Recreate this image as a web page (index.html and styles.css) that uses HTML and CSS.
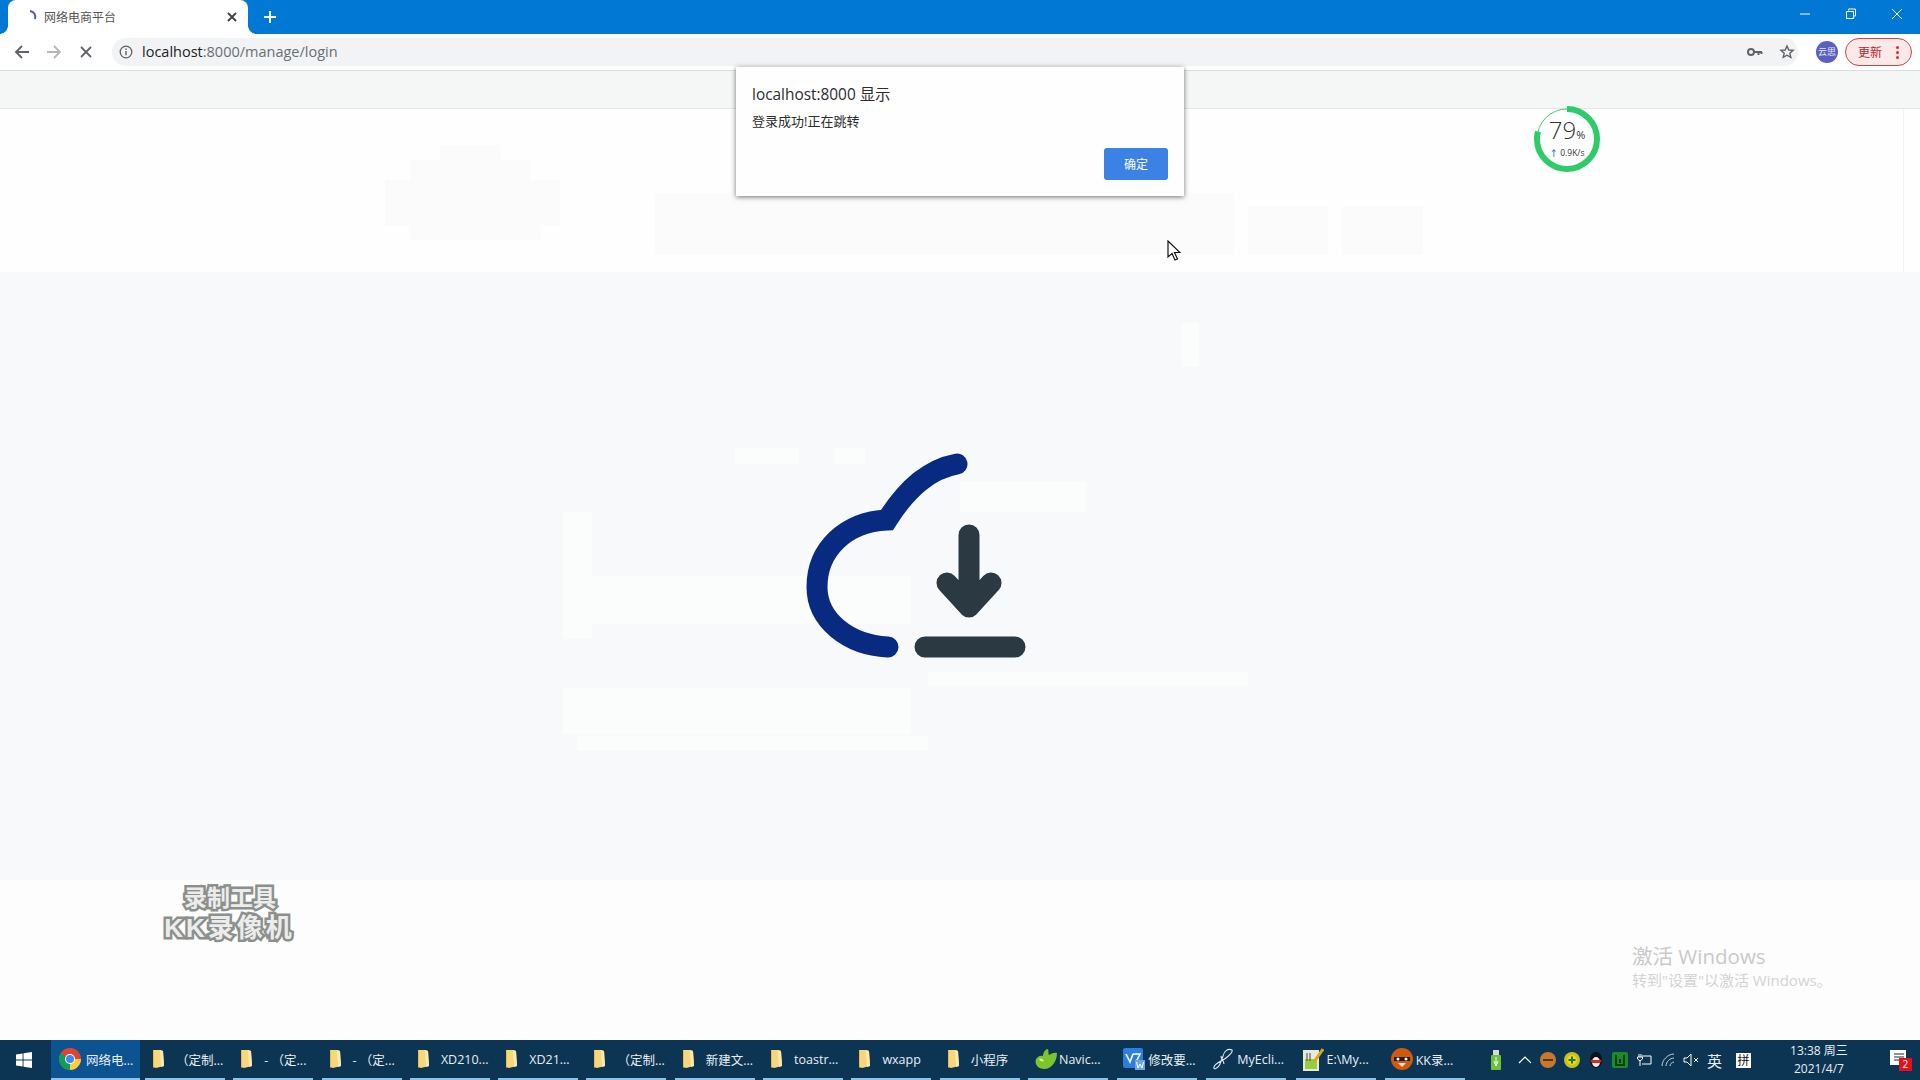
FILE: index.html
```html
<!DOCTYPE html>
<html lang="zh-CN">
<head>
    <meta charset="UTF-8">
    <meta name="viewport" content="width=device-width, initial-scale=1.0">
    <title>网络电商平台</title>
    <link rel="stylesheet" href="styles.css">
</head>
<body>
    <svg class="defs" width="0" height="0">
        <symbol id="folder" viewBox="0 0 16 20">
            <path d="M2 1h7l3 1 1 15-8 2-3-1z" fill="#f6d77c"/>
            <path d="M9 1l3 1 1 15-3 1z" fill="#fbe9ae"/>
            <path d="M2 1v17l1 1V2z" fill="#e9b94c"/>
        </symbol>
    </svg>

    <div class="titlebar">
        <div class="tab">
            <svg class="spinner" width="16" height="16" viewBox="0 0 16 16"><path d="M8 2a6 6 0 0 1 5 8" fill="none" stroke="#5b4fc4" stroke-width="2"/></svg>
            <span class="tab-title">网络电商平台</span>
            <svg class="tab-close" width="12" height="12" viewBox="0 0 12 12"><path d="M2 2l8 8M10 2l-8 8" stroke="#3c4043" stroke-width="1.8"/></svg>
        </div>
        <svg class="new-tab" width="14" height="14" viewBox="0 0 14 14"><path d="M7 1v12M1 7h12" stroke="#fff" stroke-width="2"/></svg>
        <div class="window-btns">
            <svg width="12" height="12" viewBox="0 0 12 12"><path d="M1 6h10" stroke="#fff"/></svg>
            <svg width="12" height="12" viewBox="0 0 12 12"><path d="M3.5 2.5V1h7v7H9M1.5 3.5h7v7h-7z" fill="none" stroke="#fff"/></svg>
            <svg width="12" height="12" viewBox="0 0 12 12"><path d="M1 1l10 10M11 1L1 11" stroke="#fff"/></svg>
        </div>
    </div>

    <div class="toolbar">
        <svg class="nav" width="16" height="16" viewBox="0 0 16 16"><path d="M15 8H2M8 2L2 8l6 6" fill="none" stroke="#5f6368" stroke-width="1.8"/></svg>
        <svg class="nav" width="16" height="16" viewBox="0 0 16 16"><path d="M1 8h13M8 2l6 6-6 6" fill="none" stroke="#b4b6b8" stroke-width="1.8"/></svg>
        <svg class="nav" width="16" height="16" viewBox="0 0 16 16"><path d="M3 3l10 10M13 3L3 13" fill="none" stroke="#5f6368" stroke-width="1.8"/></svg>
        <div class="omnibox">
            <svg width="14" height="14" viewBox="0 0 14 14"><circle cx="7" cy="7" r="5.8" fill="none" stroke="#5f6368" stroke-width="1.3"/><path d="M7 6v4.2M7 3.6v1.3" stroke="#5f6368" stroke-width="1.4"/></svg>
            <span class="url">localhost<span class="url-path">:8000/manage/login</span></span>
            <svg class="key" width="16" height="10" viewBox="0 0 16 10"><circle cx="4" cy="5" r="3" fill="none" stroke="#5f6368" stroke-width="2"/><path d="M7 5h8M11.5 5v3M14.5 5v2" stroke="#5f6368" stroke-width="2"/></svg>
            <svg class="star" width="16" height="16" viewBox="0 0 16 16"><path d="M8 2l1.8 4 4.3.4-3.3 2.8 1 4.2L8 11.2l-3.8 2.2 1-4.2L1.900 6.400 6.200 6z" fill="none" stroke="#5f6368" stroke-width="1.4"/></svg>
        </div>
        <div class="avatar">云思</div>
        <div class="update">更新<span class="dots"><i></i><i></i><i></i></span></div>
    </div>

    <div class="bookmarks"></div>

    <div class="page-top"></div>
    <div class="stage">
        <svg width="340" height="260" viewBox="0 0 340 260">
            <path d="M167 19C140 24 118 42 97 75C55 77 27 105 27 142C27 175 58 200 98 202" fill="none" stroke="#082a80" stroke-width="21" stroke-linecap="round" stroke-linejoin="miter"/>
            <path d="M179 90V162M157 138l22 24 22-24M135 202h90" fill="none" stroke="#2b3a42" stroke-width="21" stroke-linecap="round" stroke-linejoin="round"/>
        </svg>
    </div>
    <div class="page-bottom"></div>

    <div class="taskbar">
        <div class="start">
            <svg width="16" height="16" viewBox="0 0 16 16"><path d="M0 2.500l6.600-1v6H0zM7.500 1.300L16 0v7.500H7.500zM0 8.500h6.600v6L0 13.500zM7.500 8.500H16V16l-8.500-1.300z" fill="#fff"/></svg>
        </div>
        <div class="task task-active">
            <svg class="task-icon" width="22" height="22" viewBox="0 0 22 22">
                <circle cx="11" cy="11" r="11" fill="#db4437"/>
                <path d="M11 11L1.500 5.500A11 11 0 0 0 11 22z" fill="#0f9d58"/>
                <path d="M11 11h11A11 11 0 0 1 11 22z" fill="#ffcd40"/>
                <circle cx="11" cy="11" r="5" fill="#fff"/>
                <circle cx="11" cy="11" r="4" fill="#4285f4"/>
            </svg>
            <span>网络电...</span>
        </div>
        <div class="task"><svg class="task-icon folder"><use href="#folder"/></svg><span>（定制...</span></div>
        <div class="task"><svg class="task-icon folder"><use href="#folder"/></svg><span>- （定...</span></div>
        <div class="task"><svg class="task-icon folder"><use href="#folder"/></svg><span>- （定...</span></div>
        <div class="task"><svg class="task-icon folder"><use href="#folder"/></svg><span>XD210...</span></div>
        <div class="task"><svg class="task-icon folder"><use href="#folder"/></svg><span>XD21...</span></div>
        <div class="task"><svg class="task-icon folder"><use href="#folder"/></svg><span>（定制...</span></div>
        <div class="task"><svg class="task-icon folder"><use href="#folder"/></svg><span>新建文...</span></div>
        <div class="task"><svg class="task-icon folder"><use href="#folder"/></svg><span>toastr...</span></div>
        <div class="task"><svg class="task-icon folder"><use href="#folder"/></svg><span>wxapp</span></div>
        <div class="task"><svg class="task-icon folder"><use href="#folder"/></svg><span>小程序</span></div>
        <div class="task task-wide">
            <svg class="task-icon" width="24" height="22" viewBox="0 0 24 22"><path d="M2 11c2-3 5-4 7-3 0-3 2-7 5-7 1 3 0 5 1 6 2-1 5-3 8-2 0 8-5 16-13 16C5 21 0 17 2 11z" fill="#7cc52c"/><path d="M5 11c2-1 4 0 5 2-2 1-4 0-5-2z" fill="#d8f29a"/></svg>
            <span>Navic...</span>
        </div>
        <div class="task task-wide">
            <svg class="task-icon" width="22" height="22" viewBox="0 0 22 22"><rect width="20" height="20" rx="2" fill="#2e7de0"/><path d="M3 6l4 8 3-8M10 6h7l-4 8" fill="none" stroke="#fff" stroke-width="1.600"/><rect x="12" y="12" width="10" height="10" fill="#6ea5e8"/><path d="M13.500 14l1.500 6 2-4 2 4 1.500-6" fill="none" stroke="#fff"/></svg>
            <span>修改要...</span>
        </div>
        <div class="task task-wide">
            <svg class="task-icon" width="22" height="24" viewBox="0 0 22 24"><path d="M20 2c-4-2-8 1-9 6L8 16c-2 5-7 6-6 3 1-4 8-6 12-9 4-3 7-6 6-8zM9 8c0 3 3 5 3 8" fill="none" stroke="#dfe8f0" stroke-width="1.100"/></svg>
            <span>MyEcli...</span>
        </div>
        <div class="task task-wide">
            <svg class="task-icon" width="22" height="24" viewBox="0 0 22 24"><rect x="1" y="2" width="16" height="21" fill="#e6ebd8"/><rect x="3" y="11" width="12" height="10" fill="#9ccc3c"/><path d="M5 5v8M8 5v8" stroke="#445"/><path d="M12 14L21 1" stroke="#e0a020" stroke-width="3"/></svg>
            <span>E:\My...</span>
        </div>
        <div class="task task-wide">
            <svg class="task-icon" width="22" height="22" viewBox="0 0 22 22"><circle cx="11" cy="11" r="11" fill="#d2580f"/><path d="M3 9h16v4H3z" fill="#1d1d1d"/><circle cx="7" cy="11" r="1.500" fill="#fff"/><circle cx="15" cy="11" r="1.500" fill="#fff"/><path d="M7 15h8l-4 4z" fill="#f3e2c7"/></svg>
            <span>KK录...</span>
        </div>

        <div class="tray">
            <svg class="tray-usb" width="10" height="20" viewBox="0 0 10 20"><rect x="2" y="0" width="6" height="5" fill="#d8d8d8"/><rect y="5" width="10" height="15" rx="1" fill="#6fbf3a"/><path d="M5 7v9M3 11l2 5 2-5" stroke="#fff" fill="none"/></svg>
            <svg class="tray-up" width="14" height="8" viewBox="0 0 14 8"><path d="M1 7l6-6 6 6" fill="none" stroke="#fff" stroke-width="1.200"/></svg>
            <svg class="tray-ic" width="16" height="16" viewBox="0 0 16 16"><circle cx="8" cy="8" r="8" fill="#c8782a"/><path d="M3 7h10v2H3z" fill="#5c3312"/></svg>
            <svg class="tray-ic" width="16" height="16" viewBox="0 0 16 16"><circle cx="8" cy="8" r="8" fill="#c8c020"/><circle cx="8" cy="8" r="5" fill="#e8d820"/><path d="M8 4.500v7M4.500 8h7" stroke="#2a7a20" stroke-width="2"/></svg>
            <svg class="tray-ic" width="16" height="18" viewBox="0 0 16 18"><ellipse cx="8" cy="9" rx="6" ry="8" fill="#111"/><ellipse cx="8" cy="11" rx="4" ry="5" fill="#eee"/><path d="M2 9h12l-2 3H4z" fill="#d8262c"/></svg>
            <svg class="tray-ic" width="16" height="16" viewBox="0 0 16 16"><rect width="16" height="16" rx="2" fill="#1d8a2a"/><path d="M4 3v10h8V3M8 7v4" stroke="#0b3f14" stroke-width="2" fill="none"/></svg>
            <svg class="tray-ic" width="16" height="14" viewBox="0 0 16 14"><path d="M6 3h9v8H6M3 1v3M5 1v3M1.500 4h5v2l-2.500 2-2.500-2zM4 8v5" fill="none" stroke="#fff"/></svg>
            <svg class="tray-ic tray-wifi" width="14" height="14" viewBox="0 0 14 14"><path d="M1 13C1 7 7 1 13 1M5 13c0-4 4-8 8-8M9 13c0-2 2-4 4-4" fill="none" stroke="#c8d2da"/></svg>
            <svg class="tray-ic" width="16" height="14" viewBox="0 0 16 14"><path d="M1 5v4h3l4 4V1L4 5z" fill="none" stroke="#fff"/><path d="M11 5l4 4M15 5l-4 4" stroke="#fff"/></svg>
            <span class="ime">英</span>
            <span class="pinyin">拼</span>
            <div class="clock">
                <div>13:38 周三</div>
                <div>2021/4/7</div>
            </div>
            <div class="notify">
                <svg width="16" height="16" viewBox="0 0 16 16"><path d="M0 0h16v15H0z" fill="#fff"/><path d="M4 4h10M4 7h10M4 10h7" stroke="#223"/></svg>
                <span class="badge">2</span>
            </div>
        </div>
    </div>

    <div class="dialog">
        <div class="dialog-title">localhost:8000 显示</div>
        <div class="dialog-msg">登录成功!正在跳转</div>
        <div class="dialog-foot"><button class="dialog-ok">确定</button></div>
    </div>

    <div class="gauge">
        <svg width="68" height="68" viewBox="0 0 68 68">
            <circle cx="34" cy="34" r="30" fill="#fff" stroke="#3fce73" stroke-width="1"/>
            <circle cx="34" cy="34" r="30" fill="none" stroke="#2fcb68" stroke-width="6" pathLength="100" stroke-dasharray="79 21" transform="rotate(-90 34 34)"/>
        </svg>
        <div class="gauge-text">
            <div class="gauge-num">79<small>%</small></div>
            <div class="gauge-speed"><b>↑</b> 0.9K/s</div>
        </div>
    </div>

    <svg class="cursor" width="14" height="22" viewBox="0 0 14 22"><path d="M1 1v16l4-3.500 3 6.500 2.500-1-3-6.500H13z" fill="#fff" stroke="#111" stroke-width="1.200"/></svg>

    <div class="watermark">
        <div class="wm-one">录制工具</div>
        <div class="wm-two">KK录像机</div>
    </div>

    <div class="activate">
        <div class="activate-big">激活 Windows</div>
        <div class="activate-small">转到"设置"以激活 Windows。</div>
    </div>
</body>
</html>
```

FILE: styles.css
```css
* {
    box-sizing: border-box;
}
html, body {
    margin: 0;
    height: 100%;
    overflow: hidden;
}
body {
    display: flex;
    flex-direction: column;
    height: 1080px;
    background: #fdfefd;
    font-family: "Open Sans", "Noto Sans CJK SC", sans-serif;
    color: #3c4043;
}
.defs {
    position: absolute;
}

/* browser chrome */
.titlebar {
    height: 34px;
    background: #0078d4;
    display: flex;
    align-items: center;
    flex-shrink: 0;
}
.tab {
    position: relative;
    width: 240px;
    height: 34px;
    margin-left: 8px;
    background: #fff;
    border-radius: 8px 8px 0 0;
    display: flex;
    align-items: center;
    padding: 0 10px 0 14px;
}
.tab::before, .tab::after {
    content: "";
    position: absolute;
    bottom: 0;
    width: 8px;
    height: 8px;
}
.tab::before {
    left: -8px;
    background: radial-gradient(circle at 0 0, #0078d4 7.500px, #fff 8px);
}
.tab::after {
    right: -8px;
    background: radial-gradient(circle at 100% 0, #0078d4 7.500px, #fff 8px);
}
.tab-title {
    margin-left: 6px;
    font-size: 12px;
    color: #555;
    flex: 1;
}
.new-tab {
    margin-left: 15px;
}
.window-btns {
    margin-left: auto;
    display: flex;
    gap: 34px;
    padding-right: 17px;
    margin-top: -6px;
}
.toolbar {
    height: 37px;
    background: #fff;
    border-bottom: 1px solid #dadce0;
    display: flex;
    align-items: center;
    padding-left: 14px;
    flex-shrink: 0;
}
.nav {
    margin-right: 16px;
}
.omnibox {
    width: 1686px;
    height: 28px;
    margin-left: 2px;
    background: #f1f3f4;
    border-radius: 14px;
    display: flex;
    align-items: center;
    padding: 0 3px 0 7px;
}
.url {
    margin-left: 9px;
    padding-bottom: 2px;
    font-size: 14.500px;
    color: #202124;
    flex: 1;
}
.url-path {
    color: #6b6e72;
}
.star {
    margin-left: 16px;
}
.avatar {
    width: 22px;
    height: 22px;
    margin-left: 18px;
    border-radius: 50%;
    background: #5b5fc0;
    color: #e8e8ff;
    font-size: 9px;
    line-height: 22px;
    text-align: center;
}
.update {
    width: 67px;
    height: 28px;
    margin-left: 7px;
    border: 1px solid #d0404a;
    border-radius: 14px;
    background: #fde9e7;
    color: #b3262e;
    font-size: 12px;
    display: flex;
    align-items: center;
    padding-left: 12px;
}
.dots {
    margin-left: 14px;
    display: flex;
    flex-direction: column;
    gap: 2px;
}
.dots i {
    width: 3px;
    height: 3px;
    border-radius: 50%;
    background: #d0303a;
}
.bookmarks {
    height: 38px;
    background: #f5f6f6;
    border-bottom: 1px solid #e4e5e5;
    flex-shrink: 0;
}

/* page, the blurred leftovers of the old frame are plain background rects */
.page-top {
    --p: linear-gradient(#fbfbfb, #fbfbfb);
    height: 163px;
    background:
        var(--p) 440px 36px / 60px 20px no-repeat,
        var(--p) 410px 51px / 120px 20px no-repeat,
        var(--p) 385px 71px / 175px 45px no-repeat,
        var(--p) 410px 116px / 130px 15px no-repeat,
        var(--p) 655px 84px / 579px 62px no-repeat,
        var(--p) 1248px 98px / 80px 48px no-repeat,
        var(--p) 1342px 98px / 81px 48px no-repeat,
        #fefefe;
    border-right: 1px solid #f1f2f2;
    margin-right: 16px;
    flex-shrink: 0;
}
.stage {
    --p: linear-gradient(#fbfcfc, #fbfcfc);
    height: 608px;
    background:
        var(--p) 563px 240px / 29px 127px no-repeat,
        var(--p) 574px 304px / 337px 48px no-repeat,
        var(--p) 960px 209px / 126px 31px no-repeat,
        var(--p) 928px 400px / 320px 14px no-repeat,
        var(--p) 563px 416px / 348px 46px no-repeat,
        var(--p) 577px 464px / 351px 15px no-repeat,
        var(--p) 735px 176px / 64px 16px no-repeat,
        var(--p) 834px 176px / 31px 16px no-repeat,
        var(--p) 1181px 51px / 18px 44px no-repeat,
        #f8f9fa;
    display: flex;
    align-items: center;
    justify-content: center;
    padding-bottom: 2px;
    flex-shrink: 0;
}
.page-bottom {
    height: 160px;
    background: #fdfdfd;
    flex-shrink: 0;
}

/* taskbar */
.taskbar {
    height: 40px;
    background: #0c3554;
    display: flex;
    align-items: stretch;
    color: #e8eef3;
    font-size: 12.500px;
    flex-shrink: 0;
}
.start {
    width: 51px;
    display: flex;
    align-items: center;
    justify-content: center;
    padding-right: 4px;
}
.task {
    width: 80px;
    margin-right: 8.300px;
    display: flex;
    align-items: center;
    border-bottom: 2px solid #8cc4e8;
    position: relative;
    padding-left: 31px;
    white-space: nowrap;
}
.task-wide {
    margin-right: 9.200px;
}
.task-active {
    width: 89px;
    margin-right: 5px;
    padding-left: 35px;
    background: #0b5491;
}
.task-icon {
    position: absolute;
    left: 6px;
    top: 8px;
}
.task-active .task-icon {
    left: 8px;
}
.folder {
    width: 16px;
    height: 20px;
    top: 9px;
}
.tray {
    display: flex;
    align-items: center;
    margin-left: 17px;
    flex: 1;
}
.tray-up {
    margin-left: 17px;
}
.tray-ic {
    margin-left: 8px;
}
.tray-wifi {
    margin-left: 9px;
}
.ime {
    margin-left: 8px;
    font-size: 15px;
}
.pinyin {
    margin-left: 14px;
    width: 15px;
    height: 15px;
    background: #fff;
    color: #111;
    font-size: 12px;
    line-height: 15px;
    text-align: center;
}
.clock {
    width: 84px;
    margin-left: 26px;
    text-align: center;
    font-size: 12px;
    line-height: 18px;
}
.notify {
    position: relative;
    margin-left: 29px;
    height: 16px;
    margin-top: -4px;
}
.badge {
    position: absolute;
    left: 9px;
    top: 8px;
    width: 13px;
    height: 13px;
    background: #e0121e;
    color: #fff;
    font-size: 10px;
    line-height: 13px;
    text-align: center;
}

/* things laid over the page */
.dialog {
    position: absolute;
    left: 736px;
    top: 67px;
    width: 448px;
    height: 129px;
    background: #fdfefd;
    box-shadow: 0 1px 5px rgba(0, 0, 0, 0.55);
    padding: 16px 16px;
    color: #2c2d2f;
}
.dialog-title {
    font-size: 15.400px;
    line-height: 24px;
}
.dialog-msg {
    margin-top: 5px;
    font-size: 13px;
    line-height: 18px;
}
.dialog-foot {
    display: flex;
    justify-content: flex-end;
    margin-top: 18px;
}
.dialog-ok {
    width: 64px;
    height: 32px;
    border: none;
    border-radius: 3px;
    background: #3b82e4;
    color: #fff;
    font-family: inherit;
    font-size: 12px;
    padding: 0;
}
.gauge {
    position: absolute;
    left: 1533px;
    top: 105px;
    width: 68px;
    height: 68px;
}
.gauge-text {
    position: absolute;
    inset: 0;
    text-align: center;
    color: #333;
}
.gauge-num {
    margin-top: 13px;
    font-size: 24px;
    line-height: 24px;
    font-weight: 300;
}
.gauge-num small {
    font-size: 11px;
    font-weight: 400;
}
.gauge-speed {
    font-size: 8.500px;
    line-height: 11px;
}
.gauge-speed b {
    color: #1f7fc4;
}
.cursor {
    position: absolute;
    left: 1167px;
    top: 240px;
}
.watermark {
    position: absolute;
    left: 140px;
    top: 884px;
    width: 180px;
    text-align: center;
    font-family: "Liberation Sans", "Noto Sans CJK SC", sans-serif;
    font-weight: 700;
    color: #ececec;
    -webkit-text-stroke: 5px #8c908c;
    paint-order: stroke fill;
}
.wm-one {
    font-size: 23px;
    line-height: 29px;
}
.wm-two {
    font-size: 26px;
    line-height: 31px;
    letter-spacing: 3px;
    margin-left: -1px;
}
.activate {
    position: absolute;
    left: 1632px;
    top: 942px;
    color: #c9c9c9;
}
.activate-big {
    font-size: 20.500px;
    line-height: 28px;
}
.activate-small {
    font-size: 15px;
    line-height: 20px;
    color: #d3d3d3;
}
```
